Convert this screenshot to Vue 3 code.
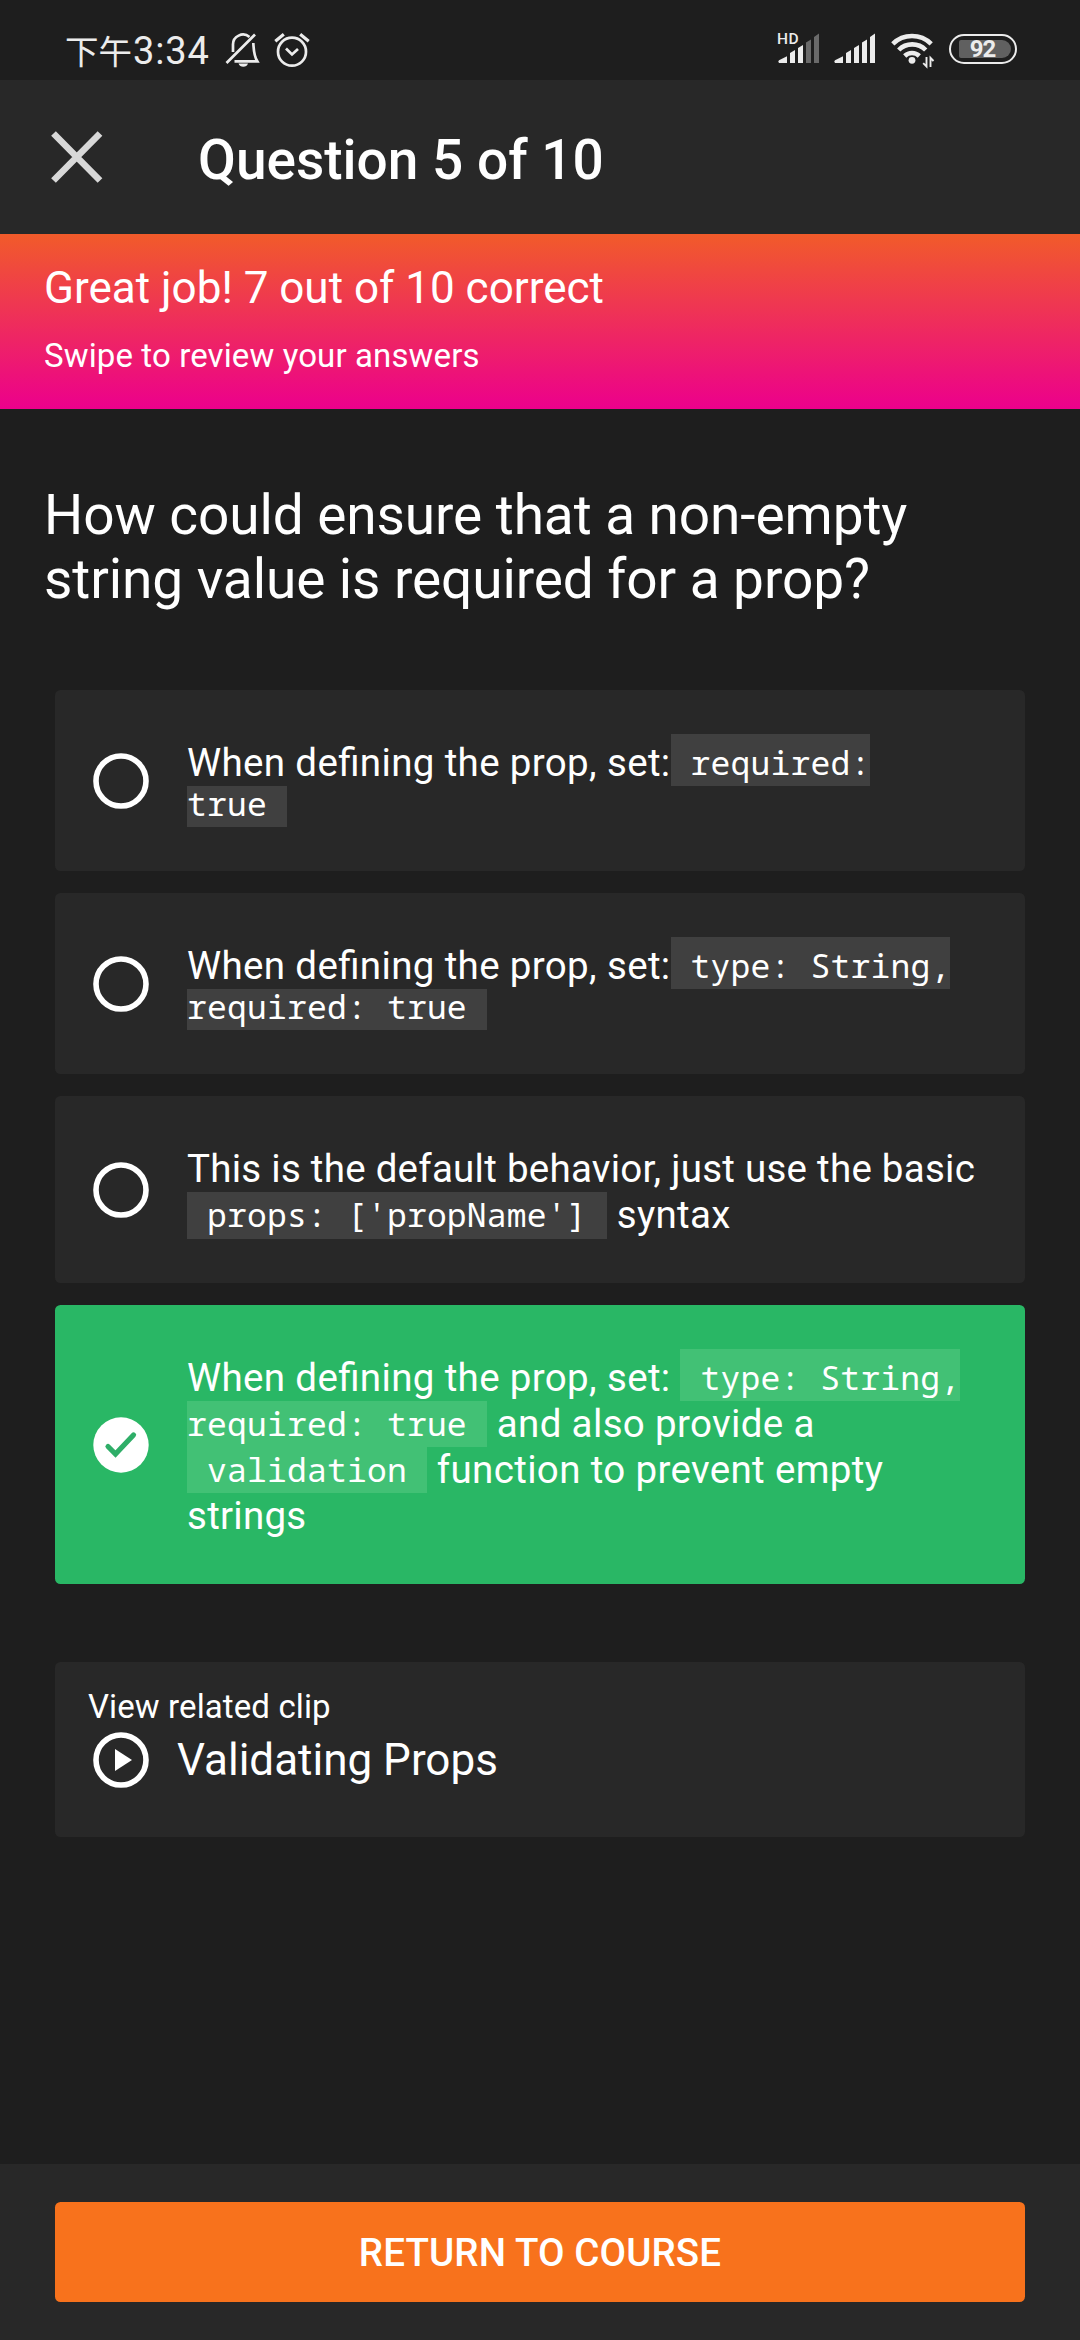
<script setup>
const lead = 'When defining the prop, set:'

const answers = [
  {
    correct: false,
    lines: [
      { kind: 'first', parts: [{ text: lead }, { code: ' required:' }] },
      { kind: 'code-only', parts: [{ code: 'true ' }] },
    ],
  },
  {
    correct: false,
    lines: [
      { kind: 'first', parts: [{ text: lead }, { code: ' type: String,' }] },
      { kind: 'code-only', parts: [{ code: 'required: true ' }] },
    ],
  },
  {
    correct: false,
    lines: [
      { kind: 'first', parts: [{ text: 'This is the default behavior, just use the basic' }] },
      { kind: 'last', parts: [{ code: " props: ['propName'] " }, { text: ' syntax' }] },
    ],
  },
  {
    correct: true,
    lines: [
      { kind: 'first', parts: [{ text: lead + ' ' }, { code: ' type: String,' }] },
      { kind: 'middle', parts: [{ code: 'required: true ' }, { text: ' and also provide a' }] },
      { kind: 'middle', parts: [{ code: ' validation ' }, { text: ' function to prevent empty' }] },
      { kind: 'last', parts: [{ text: 'strings' }] },
    ],
  },
]
</script>

<template>
  <div class="screen">
    <div class="status">
      <div class="status-left">
        <span class="ampm">下午</span><span class="clock">3:34</span>
        <svg class="bell" width="36" height="40" viewBox="224 31 36 40" fill="none" stroke="#ececec" stroke-width="2.7">
          <path d="M226.500 63L255 34.500M233 52V45a10 10 0 0 1 16.500-8M253.300 43c.6 8 .4 12.500 4 18.300H234.500" />
          <path d="M238.500 63.500h9.500q-1.200 3.200-4.700 3.200t-4.800-3.200z" fill="#ececec" stroke="none" />
        </svg>
        <svg class="alarm" width="40" height="40" viewBox="272 31 40 40" fill="none" stroke="#ececec" stroke-width="2.7">
          <circle cx="292" cy="51.700" r="14" />
          <path d="M286 48.500l6 6 6-5.500" />
          <path d="M275.300 41.300l8.500-7M300.200 34.300l8.500 7" stroke-width="3.200" />
        </svg>
      </div>
      <div class="status-right">
        <div class="signal">
          <span class="hd">HD</span>
          <svg width="46" height="34" viewBox="774 31 46 34" fill="#ececec">
            <path d="M778 63q-1.500-1.500 0-2.800l8-4V63zM789 63V53l5-3v13zM797 63V48l5-3v18z" />
            <path d="M805 63V42.500l5-3V63zM813 63V37l5-3.500V63z" fill="#6a6a6a" />
          </svg>
        </div>
        <svg class="signal2" width="46" height="34" viewBox="830 31 46 34" fill="#ececec">
          <path d="M834 63q-1.500-1.500 0-2.800l8-4V63zM845 63V53l5-3v13zM853 63V48l5-3v18zM861 63V42.500l5-3V63zM869 63V37l5-3.500V63z" />
        </svg>
        <svg class="wifi" width="46" height="40" viewBox="888 31 46 40" fill="none" stroke="#ececec" stroke-width="4.600">
          <path d="M891.800 43.800A27.500 27.500 0 0 1 930.200 43.800M897.700 50A19 19 0 0 1 924.700 50M903.700 56A10.500 10.500 0 0 1 918.300 56" />
          <circle cx="911" cy="60.300" r="3.400" fill="#ececec" stroke="none" />
          <path d="M925.500 57v9.500l-3.300-3.300M929.500 67v-9.200l3 3.200" stroke-width="1.900" />
        </svg>
        <div class="battery"><div class="level">92</div></div>
      </div>
    </div>

    <header class="header">
      <svg class="close" width="56" height="56" viewBox="0 0 56 56" stroke="#d8d8d8" stroke-width="6.600">
        <path d="M4.500 4.500L51 51.500M51 4.500L4.500 51.500" />
      </svg>
      <h1>Question 5 of 10</h1>
    </header>

    <section class="banner">
      <p class="score">Great job! 7 out of 10 correct</p>
      <p class="hint">Swipe to review your answers</p>
    </section>

    <h2 class="question">How could ensure that a non-empty<br />string value is required for a prop?</h2>

    <div class="answers">
      <div v-for="(answer, i) in answers" :key="i" class="answer" :class="{ correct: answer.correct }">
        <svg class="mark" width="56" height="56" viewBox="0 0 56 56" fill="none">
          <template v-if="answer.correct">
            <circle cx="28" cy="28" r="27.700" fill="#fff" />
            <path d="M15 29.500l7.500 7.500L40.500 18" stroke="#2fae68" stroke-width="5.200" stroke-linejoin="miter" stroke-linecap="round" />
          </template>
          <circle v-else cx="28" cy="28" r="25" stroke="#fff" stroke-width="5.600" />
        </svg>
        <div class="copy">
          <div v-for="(line, j) in answer.lines" :key="j" class="line" :class="line.kind">
            <template v-for="(part, k) in line.parts" :key="k">
              <code v-if="part.code">{{ part.code }}</code>
              <span v-else>{{ part.text }}</span>
            </template>
          </div>
        </div>
      </div>
    </div>

    <section class="clip">
      <p class="clip-label">View related clip</p>
      <div class="clip-row">
        <svg width="56" height="56" viewBox="0 0 56 56" fill="none">
          <circle cx="28" cy="28" r="25" stroke="#fff" stroke-width="5.600" />
          <path d="M22 17l17 11-17 11z" fill="#fff" />
        </svg>
        <span>Validating Props</span>
      </div>
    </section>

    <footer class="footer">
      <button class="return">RETURN TO COURSE</button>
    </footer>
  </div>
</template>

<style>
body {
  margin: 0;
  background: #1e1e1e;
}
</style>

<style scoped>
.screen {
  width: 1080px;
  height: 2340px;
  display: flex;
  flex-direction: column;
  overflow: hidden;
  background: #1e1e1e;
  color: #fff;
  font-family: Roboto, "Noto Sans CJK SC", sans-serif;
}
p, h1, h2 { margin: 0; font-weight: 400; }
svg { display: block; flex: none; }

.status {
  height: 80px;
  flex: none;
  box-sizing: border-box;
  padding: 31px 63px 0 65px;
  display: flex;
  justify-content: space-between;
  color: #ececec;
}
.status-left, .status-right { display: flex; align-items: flex-start; }
.ampm {
  width: 68px;
  font: 400 33.500px/37px "Noto Sans CJK SC", sans-serif;
}
.clock { width: 78px; font-size: 38px; line-height: 40px; letter-spacing: 0.900px; }
.bell { margin-left: 13px; }
.alarm { margin-left: 12px; }
.signal { position: relative; }
.hd {
  position: absolute;
  left: 2px;
  top: 0;
  font-size: 15.500px;
  line-height: 16px;
  font-weight: 500;
  letter-spacing: 0.500px;
}
.signal2 { margin-left: 10px; }
.wifi { margin-left: 12px; }
.battery {
  width: 68px;
  height: 30px;
  margin: 3px 0 0 14px;
  box-sizing: border-box;
  border: 2.700px solid #ececec;
  border-radius: 15px;
  padding: 4px 4px 4px 8px;
}
.level {
  height: 18px;
  border-radius: 2px 9px 9px 2px;
  background: #606060;
  font-size: 24px;
  line-height: 19px;
  font-weight: 700;
  text-align: center;
  letter-spacing: -0.900px;
  text-indent: -5px;
}

.header {
  height: 154px;
  flex: none;
  box-sizing: border-box;
  padding: 49px 0 0 49px;
  display: flex;
  align-items: flex-start;
  background: #282828;
}
.header h1 {
  margin-left: 93px;
  font-size: 55px;
  line-height: 63px;
  font-weight: 500;
}

.banner {
  height: 175px;
  flex: none;
  box-sizing: border-box;
  padding: 26px 44px 0;
  background: linear-gradient(#f15b2a, #ec008c);
}
.score { font-size: 44px; line-height: 56px; }
.hint { margin-top: 20px; font-size: 33px; line-height: 40px; letter-spacing: 0.120px; }

.question {
  margin: 74px 44px 0;
  font-size: 55px;
  line-height: 64px;
  letter-spacing: -0.090px;
}

.answers {
  display: flex;
  flex-direction: column;
  gap: 22px;
  margin: 79px 55px 0;
}
.answer {
  display: flex;
  align-items: center;
  gap: 38px;
  padding: 44px 38px;
  border-radius: 5.500px;
  background: #282828;
}
.answer.correct { background: #29b765; }
.copy { flex: 1; }
.line {
  display: flex;
  align-items: stretch;
  white-space: pre;
  font-size: 38.500px;
  height: 46px;
  --base: 36px;
}
.line.first { height: 52px; --base: 42px; }
.line.last { height: 47px; }
.line.code-only { height: 41px; --base: 31px; }
.line span {
  line-height: calc(2 * (var(--base) - 0.341em));
  letter-spacing: 0.350px;
  font-feature-settings: "liga" 1;
}
.line span:only-child { letter-spacing: 0.260px; }
.line code {
  font-family: "Droid Sans Mono", "Noto Sans Mono", "DejaVu Sans Mono", monospace;
  font-size: 33px;
  letter-spacing: 0.190px;
  line-height: calc(2 * (var(--base) - 0.385em));
  background: #404040;
}
.correct .line code { background: #42c175; }

.clip {
  height: 175px;
  box-sizing: border-box;
  margin: 78px 55px 0;
  padding: 24px 33px 0;
  border-radius: 5.500px;
  background: #282828;
}
.clip-label { font-size: 33px; line-height: 42px; letter-spacing: 0.110px; }
.clip-row {
  display: flex;
  align-items: center;
  gap: 28px;
  margin: 4px 0 0 5px;
  font-size: 44px;
  line-height: 56px;
}

.footer {
  height: 176px;
  flex: none;
  margin-top: auto;
  box-sizing: border-box;
  padding: 38px 55px 0;
  background: #282828;
}
.return {
  display: block;
  width: 100%;
  height: 100px;
  padding: 2px 0 0;
  border: 0;
  border-radius: 5.500px;
  background: #f8721c;
  color: #fff;
  font: 500 38.500px/98px Roboto, sans-serif;
  letter-spacing: 0.120px;
}
</style>
